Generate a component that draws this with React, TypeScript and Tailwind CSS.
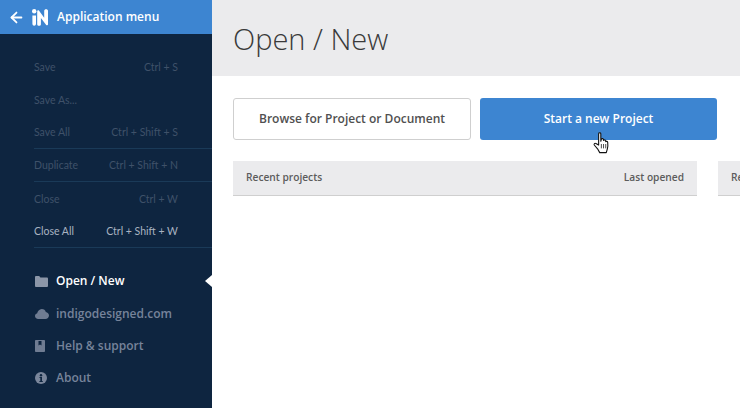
import { ArrowLeft } from "lucide-react"
import type { ReactNode } from "react"

const FILE_ITEMS = [
  { label: "Save", keys: "Ctrl + S", line: false },
  { label: "Save As...", keys: "", line: false },
  { label: "Save All", keys: "Ctrl + Shift + S", line: true },
  { label: "Duplicate", keys: "Ctrl + Shift + N", line: true },
  { label: "Close", keys: "Ctrl + W", line: false },
  { label: "Close All", keys: "Ctrl + Shift + W", line: true, active: true },
]

function Logo() {
  return (
    <svg width="16" height="17" viewBox="0 0 16 17" fill="#fff">
      <circle cx="2.200" cy="2.200" r="2.200" />
      <path d="M.4 6.500h3.600v8.300c0 1.200-.8 2-1.800 2s-1.800-.8-1.800-2z" />
      <path d="M5.200 2.400c0-.9 1-1.400 1.700-.8l5.300 7.200V1.800C12.200.8 13 .2 14.100.2S16 .8 16 1.800v13.400c0 1-1.100 1.500-1.800.8L8.900 8.900v6.300c0 .9-.8 1.600-1.800 1.600s-1.900-.7-1.900-1.600z" />
    </svg>
  )
}

function FolderIcon() {
  return (
    <svg width="13" height="11" viewBox="0 0 13 11" fill="#8b96a8">
      <path d="M0 1.200C0 .5.500 0 1.200 0h3l1.200 1.500h6.400c.7 0 1.200.5 1.200 1.200v7c0 .7-.5 1.300-1.200 1.300H1.200C.5 11 0 10.400 0 9.700z" />
    </svg>
  )
}

function CloudIcon() {
  return (
    <svg width="14" height="10" viewBox="0 0 14 10" fill="#6f7c92">
      <path d="M3.200 10C1.400 10 0 8.700 0 7.100c0-1.300.9-2.400 2.200-2.800C2.600 2.400 4.200 0 6.800 0c2 0 3.600 1.300 4 3.100 1.700.2 3.200 1.700 3.200 3.400 0 1.900-1.600 3.500-3.600 3.500z" />
    </svg>
  )
}

function BookIcon() {
  return (
    <svg width="10" height="12" viewBox="0 0 10 12" fill="#6f7c92">
      <path fillRule="evenodd" d="M1 0h8c.5 0 1 .4 1 1v10c0 .6-.5 1-1 1H1c-.5 0-1-.4-1-1V1c0-.6.5-1 1-1zm2.500 1v4.500L5 4.400l1.500 1.100V1z" />
    </svg>
  )
}

function InfoIcon() {
  return (
    <svg width="12" height="12" viewBox="0 0 12 12">
      <circle cx="6" cy="6" r="6" fill="#7a869b" />
      <circle cx="6" cy="3.200" r="1.200" fill="#0e2540" />
      <path d="M4.500 5h2.500v4h.8v1H4.400V9h.9V6h-.8z" fill="#0e2540" />
    </svg>
  )
}

function NavRow({ icon, label, active }: { icon: ReactNode; label: string; active?: boolean }) {
  return (
    <div className="relative flex h-[32.4px] items-center">
      <div className="flex w-[56px] justify-start pl-[35px]">{icon}</div>
      <span className={`text-[12px] font-semibold ${active ? "text-white" : "text-[#76839a]"}`}>{label}</span>
      {active && (
        <div className="absolute right-0 top-[10px] h-0 w-0 border-y-[6px] border-r-[7px] border-y-transparent border-r-white" />
      )}
    </div>
  )
}

export default function App() {
  return (
    <div className="flex h-[408px] w-[740px] overflow-hidden bg-white font-['Open_Sans',sans-serif]">
      <aside className="flex w-[212px] shrink-0 flex-col bg-[#0e2540]">
        <div className="flex h-[34px] items-center bg-[#3d85d1] pl-[8px] text-white">
          <ArrowLeft size={17} strokeWidth={2.5} />
          <div className="ml-[7px] flex">
            <Logo />
          </div>
          <span className="ml-[9px] text-[12px] font-semibold">Application menu</span>
        </div>
        <div className="mt-[16px] pl-[34px]">
          {FILE_ITEMS.map((item) => (
            <div
              key={item.label}
              className={`flex h-[33px] items-center justify-between pr-[34px] pt-[2px] font-['Lato',sans-serif] text-[10.5px] ${item.active ? "text-[#a9b3c1]" : "text-[#3f5169]"} ${item.line ? "border-b border-[#1a3a58]" : ""}`}
            >
              <span>{item.label}</span>
              <span>{item.keys}</span>
            </div>
          ))}
        </div>
        <div className="mt-[17px]">
          <NavRow icon={<FolderIcon />} label="Open / New" active />
          <NavRow icon={<CloudIcon />} label="indigodesigned.com" />
          <NavRow icon={<BookIcon />} label="Help & support" />
          <NavRow icon={<InfoIcon />} label="About" />
        </div>
      </aside>
      <main className="min-w-0 flex-1">
        <header className="flex h-[76px] items-center bg-[#ebebed] pl-[21px] pt-[1px]">
          <h1 className="text-[29px] font-light text-[#3a3a3a]">Open / New</h1>
        </header>
        <div className="flex gap-[9px] pl-[21px] pt-[22px]">
          <button className="h-[42px] w-[238px] rounded-[3px] border border-[#cfcfcf] bg-white text-[12px] font-semibold text-[#505050]">
            Browse for Project or Document
          </button>
          <button className="relative h-[42px] w-[237px] rounded-[3px] bg-[#3d85d1] text-[12px] font-semibold text-white">
            Start a new Project
            <svg className="absolute left-[113px] top-[34px]" width="20" height="24" viewBox="0 0 18 22">
              <path d="M5 1.500c0-1 2-1 2 0v7l.5-2c.5-.8 1.800-.5 1.800.3l.2 1c.3-.8 1.700-.7 1.900.2l.1 1c.4-.7 1.700-.5 1.800.4.2 1.500.2 4-.3 6l-1 3.500H6l-2-3.500-3-3.500c-.6-1 .6-2 1.500-1.300L5 12z" fill="#fff" stroke="#111" strokeWidth="1" strokeLinejoin="round" />
              <path d="M7.500 11v4M9.500 11v4M11.500 11v4" stroke="#111" strokeWidth=".7" />
            </svg>
          </button>
        </div>
        <div className="mt-[21px] flex gap-[21px] pl-[21px]">
          <div className="flex h-[35px] w-[464px] shrink-0 items-center justify-between border-b border-[#cfcfcf] bg-[#ebebed] px-[13px] text-[10.2px] font-semibold text-[#5c5c5c]">
            <span>Recent projects</span>
            <span>Last opened</span>
          </div>
          <div className="flex h-[35px] flex-1 items-center overflow-hidden whitespace-nowrap border-b border-[#cfcfcf] bg-[#ebebed] pl-[13px] text-[10.2px] font-semibold text-[#5c5c5c]">
            Recent
          </div>
        </div>
      </main>
    </div>
  )
}
